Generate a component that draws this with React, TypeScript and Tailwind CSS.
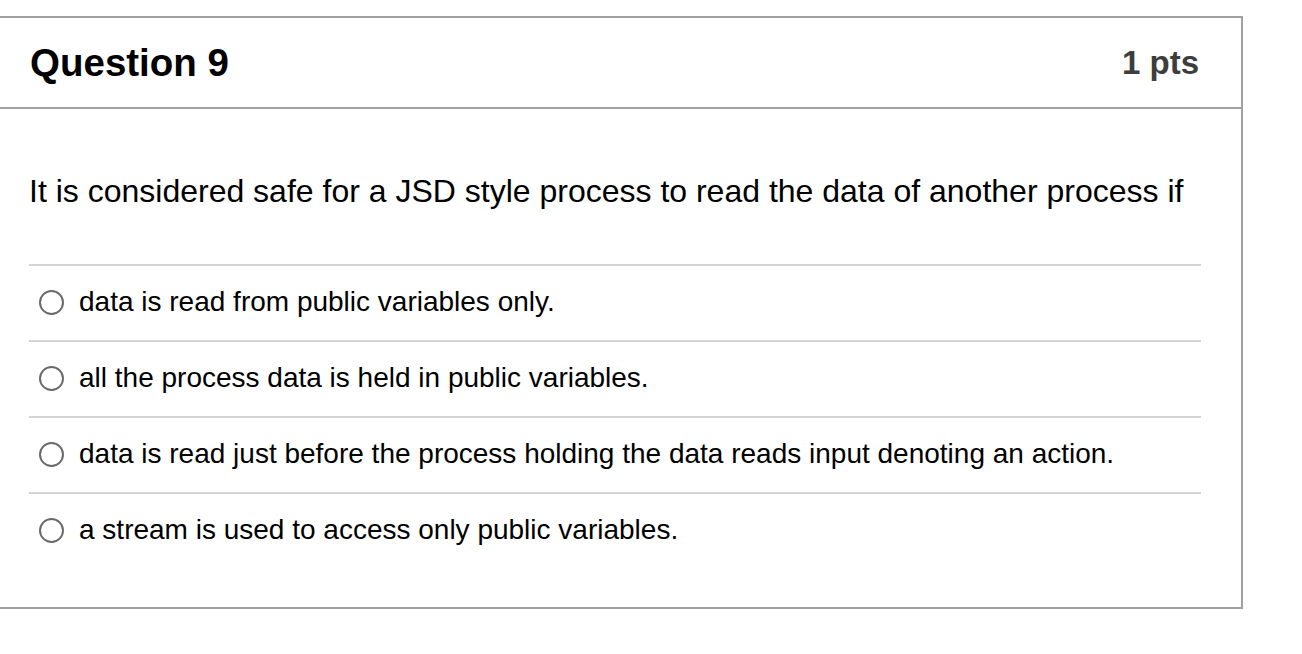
const options = [
  "data is read from public variables only.",
  "all the process data is held in public variables.",
  "data is read just before the process holding the data reads input denoting an action.",
  "a stream is used to access only public variables.",
];

export default function App() {
  return (
    <div className="min-h-screen bg-white pt-[16px] font-['Liberation_Sans',Arial,sans-serif]">
      <div className="w-[1243px] border-t-2 border-r-2 border-b-2 border-[#a0a0a0]">
        <div className="flex h-[91px] items-center justify-between border-b-2 border-[#a0a0a0] pl-[30px] pr-[42px]">
          <h2 className="text-[38.5px] font-bold text-black">Question 9</h2>
          <div className="text-[33px] font-bold text-[#3d3d3d]">1 pts</div>
        </div>
        <div className="pl-[29px] pr-[40px] pt-[64px] pb-[39px]">
          <p className="mb-[55px] text-[32px] leading-[36px] text-black">
            It is considered safe for a JSD style process to read the data of another process if
          </p>
          <div>
            {options.map((opt) => (
              <label
                key={opt}
                className="flex h-[76px] items-center border-t-2 border-[#d4d4d4] pb-[2px]"
              >
                <span className="ml-[10px] mr-[15px] h-[25px] w-[25px] shrink-0 rounded-full border-2 border-[#6a6a6a]" />
                <span className="text-[28px] text-black">{opt}</span>
              </label>
            ))}
          </div>
        </div>
      </div>
    </div>
  );
}
